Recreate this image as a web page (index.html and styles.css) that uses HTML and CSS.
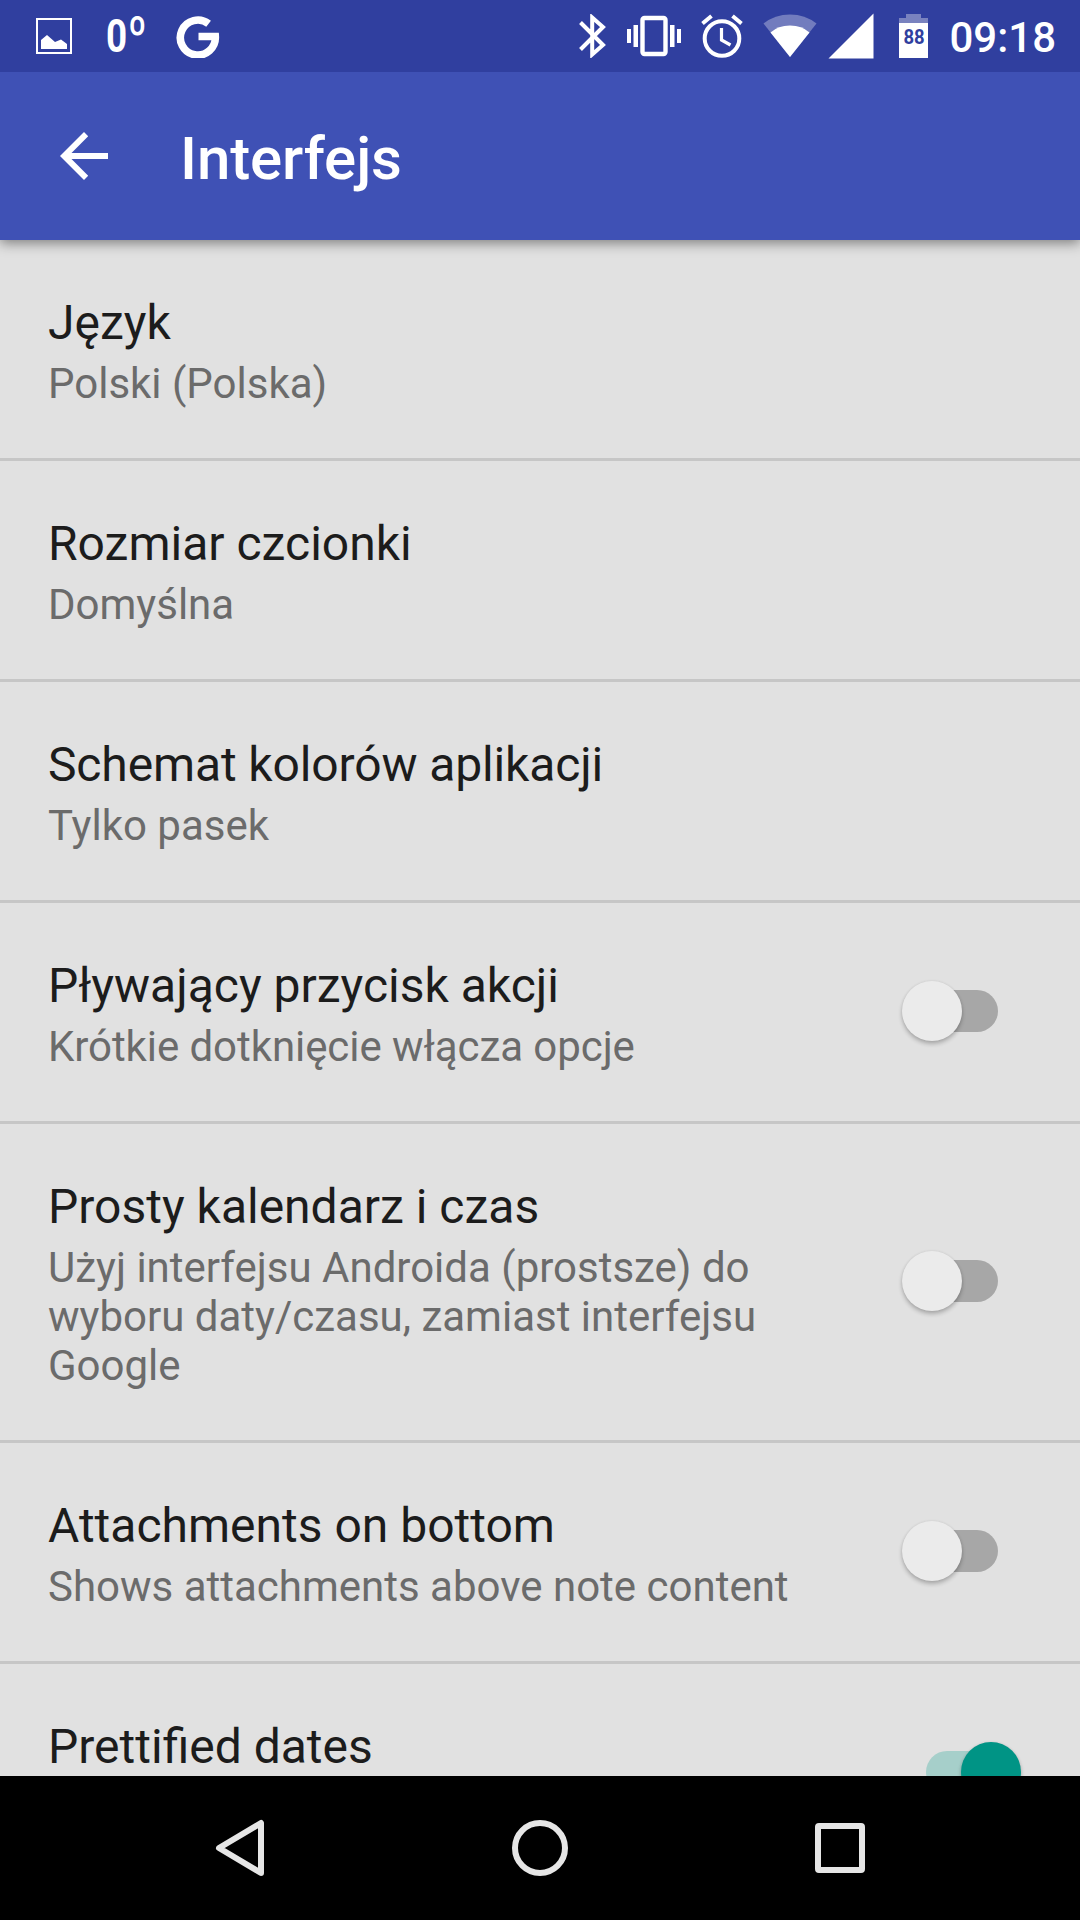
FILE: index.html
```html
<!DOCTYPE html>
<html lang="pl">
  <head>
    <meta charset="utf-8" />
    <meta name="viewport" content="width=device-width,initial-scale=1.0" />
    <title>Interfejs</title>
    <link rel="stylesheet" href="styles.css">
  </head>
  <body>
    <div id="app">
      <header class="status-bar">
        <div class="notifications">
          <svg class="icon-image" width="36" height="36" viewBox="0 0 36 36">
            <rect x="1" y="1" width="34" height="34" fill="none" stroke="#fff" stroke-width="2" />
            <path d="M5 31V22L11 17L19 24L25 21.5L31 26V31Z" fill="#fff" />
          </svg>
          <span class="temperature">0<span class="degree">º</span></span>
          <svg class="icon-google" width="44" height="44" viewBox="0 0 44 44">
            <path d="M32.600 9.800A17.500 17.500 0 1 0 39.300 22.500H22.500" fill="none" stroke="#fff" stroke-width="7.6" />
          </svg>
        </div>
        <div class="system">
          <svg class="icon-bluetooth" width="28" height="44" viewBox="0 0 28 44">
            <path d="M2.5 8.5L25 31L14.2 40.5V3.5L25 13L2.5 35.5" fill="none" stroke="#fff" stroke-width="4" />
          </svg>
          <svg class="icon-vibrate" width="54" height="42" viewBox="0 0 54 42">
            <rect x="15.5" y="3" width="23" height="36" rx="2" fill="none" stroke="#fff" stroke-width="4.4" />
            <path d="M0 14h4v14H0zM6.5 10h4.5v22H6.5zM43 10h4.5v22H43zM50 14h4v14h-4z" fill="#fff" />
          </svg>
          <svg class="icon-alarm" width="42" height="44" viewBox="0 0 42 44">
            <circle cx="21" cy="24.5" r="17.3" fill="none" stroke="#fff" stroke-width="4" />
            <path d="M1.5 9.5L10.5 2M40.5 9.5L31.5 2" stroke="#fff" stroke-width="4" />
            <path d="M20.5 14V26L29.5 31" fill="none" stroke="#fff" stroke-width="3.2" />
          </svg>
          <svg class="icon-wifi" width="54" height="44" viewBox="0 0 54 44">
            <path d="M27 43L0.5 9.5Q12 0.5 27 0.5T53.5 9.5Z" fill="#fff" opacity=".32" />
            <path d="M27 43L7.5 18.5Q15 11.5 27 11.5T46.5 18.5Z" fill="#fff" />
          </svg>
          <svg class="icon-signal" width="46" height="46" viewBox="0 0 46 46">
            <path d="M45.5 0.5V45.5H0.5Z" fill="#fff" />
          </svg>
          <div class="battery"><span>88</span></div>
          <span class="clock">09:18</span>
        </div>
      </header>

      <div class="toolbar">
        <svg class="back" width="48" height="48" viewBox="0 0 48 48">
          <path d="M48 21H11.5L28.2 4.2L24 0L0 24L24 48L28.2 43.8L11.5 27H48Z" fill="#fff" />
        </svg>
        <h1>Interfejs</h1>
      </div>

      <ul class="preferences">
        <li class="preference">
          <div class="text">
            <div class="title">Język</div>
            <div class="summary">Polski (Polska)</div>
          </div>
        </li>
        <li class="preference">
          <div class="text">
            <div class="title">Rozmiar czcionki</div>
            <div class="summary">Domyślna</div>
          </div>
        </li>
        <li class="preference">
          <div class="text">
            <div class="title tight">Schemat kolorów aplikacji</div>
            <div class="summary">Tylko pasek</div>
          </div>
        </li>
        <li class="preference">
          <div class="text">
            <div class="title">Pływający przycisk akcji</div>
            <div class="summary tight">Krótkie dotknięcie włącza opcje</div>
          </div>
          <div class="switch"></div>
        </li>
        <li class="preference">
          <div class="text">
            <div class="title">Prosty kalendarz i czas</div>
            <div class="summary">Użyj interfejsu Androida (prostsze) do<br>wyboru daty/czasu, zamiast interfejsu<br>Google</div>
          </div>
          <div class="switch"></div>
        </li>
        <li class="preference">
          <div class="text">
            <div class="title">Attachments on bottom</div>
            <div class="summary">Shows attachments above note content</div>
          </div>
          <div class="switch"></div>
        </li>
        <li class="preference last">
          <div class="text">
            <div class="title">Prettified dates</div>
          </div>
          <div class="switch on"></div>
        </li>
      </ul>

      <nav class="nav-bar">
        <svg width="60" height="60" viewBox="0 0 60 60">
          <path d="M51 5V55L9 30Z" />
        </svg>
        <svg width="60" height="60" viewBox="0 0 60 60">
          <circle cx="30" cy="30" r="25" />
        </svg>
        <svg width="60" height="60" viewBox="0 0 60 60">
          <rect x="8" y="8" width="44" height="44" rx="1" />
        </svg>
      </nav>
    </div>
  </body>
</html>
```
FILE: styles.css
```css
* {
  box-sizing: border-box;
}
body {
  margin: 0;
  font-family: Roboto, sans-serif;
  background-color: #e1e1e1;
}
svg {
  display: block;
  flex: none;
}
#app {
  width: 1080px;
  height: 1920px;
  display: flex;
  flex-direction: column;
  overflow: hidden;
}

/* status bar */
.status-bar {
  position: relative;
  z-index: 2;
  flex: none;
  height: 72px;
  display: flex;
  justify-content: space-between;
  padding: 0 24px 0 36px;
  background-color: #303f9f;
  color: #fff;
}
.notifications,
.system {
  display: flex;
  align-items: center;
}
.temperature {
  width: 38px;
  margin-left: 34px;
  font-size: 46px;
  font-weight: 700;
  line-height: 74px;
  white-space: nowrap;
  transform: scaleX(0.8);
  transform-origin: 0 50%;
}
.degree {
  margin-left: 1px;
  font-size: 51px;
  font-weight: 700;
  line-height: 1px;
}
.icon-google {
  margin-left: 32px;
}
.icon-vibrate {
  margin-left: 21px;
}
.icon-alarm {
  margin-left: 20px;
}
.icon-wifi {
  margin-left: 20px;
}
.icon-signal {
  margin-left: 11px;
}
.battery {
  width: 29px;
  height: 44px;
  margin: 0 21px 0 25px;
  padding-top: 11px;
  background:
    linear-gradient(#7982bf, #7982bf) 7px 0 / 15px 4px no-repeat,
    linear-gradient(#7982bf 5px, #fff 5px) 0 4px / 29px 40px no-repeat;
  color: #303f9f;
  font-size: 21px;
  font-weight: 700;
  line-height: 25px;
  text-align: center;
}
.battery span {
  display: inline-block;
  transform: scaleX(0.88);
}
.clock {
  font-size: 42px;
  font-weight: 500;
  line-height: 72px;
  padding-top: 3px;
}

/* toolbar */
.toolbar {
  position: relative;
  z-index: 1;
  flex: none;
  height: 168px;
  display: flex;
  align-items: center;
  padding-left: 60px;
  background-color: #3f51b5;
  color: #fff;
  box-shadow: 0 3px 12px rgba(0, 0, 0, 0.45);
}
.toolbar h1 {
  margin: 6px 0 0 72px;
  font-size: 60px;
  font-weight: 500;
  line-height: 70px;
  letter-spacing: -0.1px;
}

/* preference list */
.preferences {
  flex: 1;
  min-height: 0;
  margin: 0;
  padding: 0;
  list-style: none;
  overflow: hidden;
}
.preference {
  display: flex;
  align-items: center;
  justify-content: space-between;
  padding: 54px 58px 50px 48px;
  border-bottom: 3px solid #c6c6c6;
}
.title {
  color: #1c1c1c;
  font-size: 48px;
  line-height: 57px;
  white-space: nowrap;
}
.summary {
  margin-top: 8px;
  color: #6b6b6b;
  font-size: 42px;
  line-height: 49px;
  white-space: nowrap;
}
.title.tight {
  letter-spacing: -0.13px;
}
.summary.tight {
  letter-spacing: -0.07px;
}
.preference.last {
  height: 221px;
  align-items: flex-start;
}

/* switch */
.switch {
  position: relative;
  flex: none;
  width: 72px;
  height: 42px;
  margin: -6px 24px 0 0;
  border-radius: 21px;
  background-color: #a7a7a7;
}
.switch::after {
  content: '';
  position: absolute;
  top: -9px;
  left: -24px;
  width: 60px;
  height: 60px;
  border-radius: 50%;
  background-color: #ebebeb;
  box-shadow: 0 3px 4px rgba(0, 0, 0, 0.24), 0 0 3px rgba(0, 0, 0, 0.08);
}
.switch.on {
  margin-top: 33px;
  background-color: #a6cfca;
}
.switch.on::after {
  left: 35px;
  background-color: #009485;
}

/* navigation bar */
.nav-bar {
  flex: none;
  height: 144px;
  display: flex;
  align-items: center;
  justify-content: center;
  gap: 240px;
  background-color: #000;
}
.nav-bar svg {
  fill: none;
  stroke: #e6e6e6;
  stroke-width: 6;
  stroke-linejoin: round;
}
```
